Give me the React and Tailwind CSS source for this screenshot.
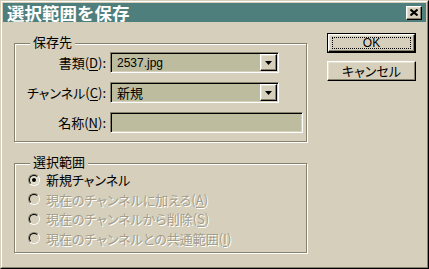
import React from "react";

const jp = "font-['Noto_Sans_CJK_JP',sans-serif] [font-feature-settings:'palt']";
const sunken =
  "border border-t-[#86826e] border-l-[#86826e] border-b-white border-r-white shadow-[inset_1px_1px_0_#000,inset_-1px_-1px_0_#d5cfbc]";
const raised =
  "border border-t-white border-l-white border-b-black border-r-black shadow-[inset_-1px_-1px_0_#86826e,inset_1px_1px_0_#e6e2d2]";
const etched = "border border-[#86826e] shadow-[inset_1px_1px_0_#fff,1px_1px_0_#fff]";

const U = ({ children }) => <span className="underline underline-offset-2">{children}</span>;

const ComboBox = ({ value, latin }) => (
  <div className={`w-[169px] h-[21px] bg-[#bdbc9f] flex items-center ${sunken}`}>
    <span
      className={`flex-1 pl-[6px] text-black ${
        latin ? "font-['Liberation_Sans',sans-serif] text-[12px]" : `${jp} text-[13px]`
      }`}
    >
      {value}
    </span>
    <div className={`w-[17px] h-[17px] mr-[1px] bg-[#d5cfbc] flex items-center justify-center ${raised}`}>
      <svg width="7" height="4" viewBox="0 0 7 4">
        <path d="M0 0h7L3.5 4z" fill="#000" />
      </svg>
    </div>
  </div>
);

const Field = ({ label, children }) => (
  <div className="flex items-center h-[21px]">
    <span className={`w-[91px] text-right text-[13px] text-black ${jp}`}>{label}</span>
    <div className="ml-[4px]">{children}</div>
  </div>
);

const Radio = ({ checked, disabled, children }) => (
  <div className="flex items-center h-[19.5px]">
    <div className="ml-[13px] w-[12px] h-[12px] rounded-full border border-t-[#86826e] border-l-[#86826e] border-b-white border-r-white">
      <div
        className={`w-[10px] h-[10px] rounded-full border border-t-black border-l-black border-b-[#d5cfbc] border-r-[#d5cfbc] flex items-center justify-center ${
          disabled ? "bg-[#d5cfbc]" : "bg-[#e4e0d0]"
        }`}
      >
        {checked && <div className="w-[4px] h-[4px] rounded-full bg-black" />}
      </div>
    </div>
    <span
      className={`ml-[6px] text-[13px] ${jp} ${
        disabled ? "text-[#a29e8c] [text-shadow:1px_1px_0_#fff]" : "text-black"
      }`}
    >
      {children}
    </span>
  </div>
);

const Button = ({ children, primary }) => (
  <div className={primary ? "border border-black" : ""}>
    <div
      className={`${primary ? "w-[87px] h-[18px]" : "w-[89px] h-[20px]"} bg-[#d5cfbc] flex items-center justify-center ${raised}`}
    >
      {primary ? (
        <div className="w-[79px] h-[12px] border border-dotted border-black flex items-center justify-center">
          <span className="font-['Liberation_Sans',sans-serif] text-[12px] leading-none text-black">OK</span>
        </div>
      ) : (
        <span className={`text-[13px] text-black ${jp}`}>キャンセル</span>
      )}
    </div>
  </div>
);

export default function App() {
  return (
    <div className="w-[429px] h-[269px] border border-t-[#d5cfbc] border-l-[#d5cfbc] border-b-black border-r-black">
      <div className="w-full h-full border border-t-white border-l-white border-b-[#86826e] border-r-[#86826e] bg-[#d5cfbc] p-[1px] flex flex-col">
        {/* Title bar */}
        <div className="h-[19px] bg-[#4f7f7c] flex items-center">
          <span className={`ml-[4px] text-[17.5px] leading-[19px] font-bold text-white font-['Noto_Sans_CJK_JP',sans-serif]`}>
            選択範囲を保存
          </span>
          <div className={`ml-auto mr-[4px] w-[16px] h-[14px] bg-[#d5cfbc] flex items-center justify-center ${raised}`}>
            <svg width="8" height="7" viewBox="0 0 8 7">
              <path d="M0.5 0.5L7.5 6.5M7.5 0.5L0.5 6.5" stroke="#000" strokeWidth="2" />
            </svg>
          </div>
        </div>

        {/* Body */}
        <div className="flex pl-[11px] pt-[11px]">
          <div className="w-[293px] pt-[10px]">
            <div className={`relative h-[99px] pt-[8px] flex flex-col gap-[9px] ${etched}`}>
              <span className={`absolute top-[-10px] left-[15px] px-[3px] bg-[#d5cfbc] text-[13px] leading-[16px] text-black ${jp}`}>
                保存先
              </span>
              <Field label={<>書類(<U>D</U>):</>}>
                <ComboBox value="2537.jpg" latin />
              </Field>
              <Field label={<>チャンネル(<U>C</U>):</>}>
                <ComboBox value="新規" />
              </Field>
              <Field label={<>名称(<U>N</U>):</>}>
                <div className={`w-[193px] h-[21px] bg-[#bdbc9f] ${sunken}`} />
              </Field>
            </div>

            <div className={`relative mt-[21px] h-[90px] pt-[6px] ${etched}`}>
              <span className={`absolute top-[-10px] left-[15px] px-[3px] bg-[#d5cfbc] text-[13px] leading-[16px] text-black ${jp}`}>
                選択範囲
              </span>
              <Radio checked>新規チャンネル</Radio>
              <Radio disabled>現在のチャンネルに加える(<U>A</U>)</Radio>
              <Radio disabled>現在のチャンネルから削除(<U>S</U>)</Radio>
              <Radio disabled>現在のチャンネルとの共通範囲(<U>I</U>)</Radio>
            </div>
          </div>

          <div className="ml-[20px] flex flex-col gap-[8px]">
            <Button primary>OK</Button>
            <Button>キャンセル</Button>
          </div>
        </div>
      </div>
    </div>
  );
}
